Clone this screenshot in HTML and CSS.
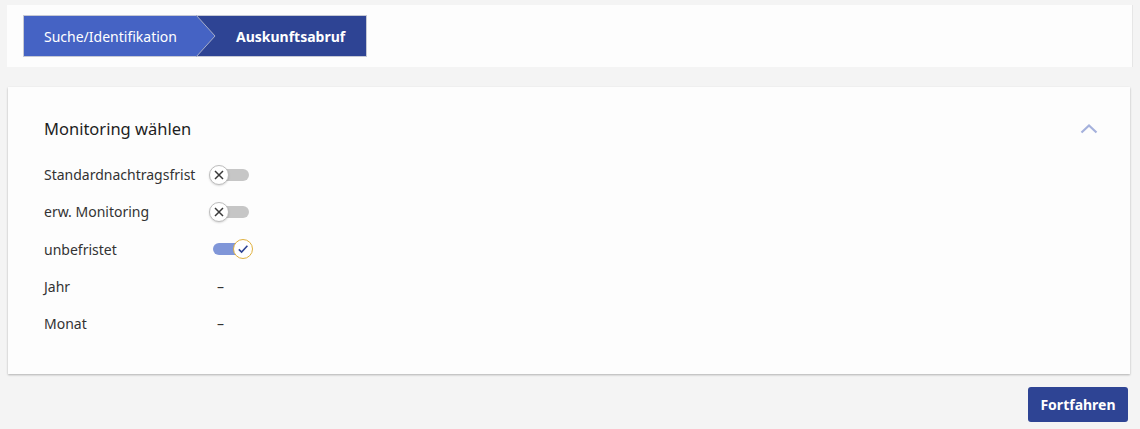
FILE: index.html
```html
<!DOCTYPE html>
<html lang="de">
<head>
<meta charset="utf-8">
<title>Auskunftsabruf</title>
<link rel="stylesheet" href="styles.css">
</head>
<body>
<div class="top-panel">
  <nav class="crumbs">
    <div class="crumb crumb-first">
      <span>Suche/Identifikation</span>
      <svg class="crumb-arrow" width="20" height="42" viewBox="0 0 20 42"><polygon points="0,0 19,21 0,42" fill="#4563c4"/><polyline points="0,0 19,21 0,42" fill="none" stroke="#a7aec8" stroke-width="1"/></svg>
    </div>
    <div class="crumb crumb-active">Auskunftsabruf</div>
  </nav>
</div>

<section class="card">
  <div class="card-head">
    <h2 class="card-title">Monitoring wählen</h2>
    <svg class="chevron" width="18" height="11" viewBox="0 0 18 11"><polyline points="1.5,9.5 9,2.5 16.5,9.5" fill="none" stroke="#a5b1dc" stroke-width="2.2"/></svg>
  </div>
  <div class="rows">
    <div class="row">
      <span class="label">Standardnachtragsfrist</span>
      <span class="toggle off"><span class="track"></span><span class="thumb"><svg width="12" height="12" viewBox="0 0 12 12"><path d="M2 2 L10 10 M10 2 L2 10" stroke="#3a3a3a" stroke-width="1.5" fill="none"/></svg></span></span>
    </div>
    <div class="row">
      <span class="label">erw. Monitoring</span>
      <span class="toggle off"><span class="track"></span><span class="thumb"><svg width="12" height="12" viewBox="0 0 12 12"><path d="M2 2 L10 10 M10 2 L2 10" stroke="#3a3a3a" stroke-width="1.5" fill="none"/></svg></span></span>
    </div>
    <div class="row">
      <span class="label">unbefristet</span>
      <span class="toggle on"><span class="track"></span><span class="thumb"><svg width="12" height="12" viewBox="0 0 12 12"><path d="M1.8 6.4 L4.6 9 L10.4 2.8" stroke="#2e4494" stroke-width="1.6" fill="none"/></svg></span></span>
    </div>
    <div class="row">
      <span class="label">Jahr</span>
      <span class="value">–</span>
    </div>
    <div class="row">
      <span class="label">Monat</span>
      <span class="value">–</span>
    </div>
  </div>
</section>

<div class="actions">
  <button class="btn-primary" type="button">Fortfahren</button>
</div>
</body>
</html>
```
FILE: styles.css
```css
* { box-sizing: border-box; }
html, body { margin: 0; padding: 0; }
body {
  background: #f4f4f4;
  font-family: "Noto Sans", "Open Sans", sans-serif;
  color: #333;
  font-size: 14px;
}
.top-panel {
  margin: 5px 7px 0 7px;
  height: 62px;
  background: #fdfdfd;
  padding: 10px 16px;
  border-right: 1px solid #e6e6e6;
}
.crumbs {
  display: inline-flex;
  height: 42px;
  border: 1px solid #c6c9d4;
}
.crumb {
  display: flex;
  align-items: center;
  height: 40px;
  font-size: 14px;
  color: #fff;
}
.crumb-first {
  position: relative;
  width: 173px;
  background: #4563c4;
  padding-left: 20px;
}
.crumb-arrow {
  position: absolute;
  right: -19px;
  top: -1px;
  z-index: 1;
}
.crumb-active {
  width: 169px;
  background: #2e4494;
  padding-left: 39px;
  font-weight: 700;
}
.card {
  margin: 20px 10px 0 8px;
  height: 287px;
  background: #fdfdfd;
  box-shadow: 0 1px 2px rgba(0,0,0,0.28);
  padding: 27px 32px 0 36px;
}
.card-head {
  display: flex;
  align-items: center;
  justify-content: space-between;
  height: 28px;
}
.card-title {
  margin: 0;
  font-size: 16.5px;
  font-weight: 400;
  color: #1e1e1e;
}
.chevron { margin-top: 0; }
.rows {
  margin-top: 14px;
  display: flex;
  flex-direction: column;
}
.row {
  display: flex;
  align-items: center;
  height: 37.3px;
}
.label {
  width: 165px;
  color: #333;
}
.value {
  padding-left: 8px;
}
.toggle {
  position: relative;
  width: 44px;
  height: 22px;
}
.track {
  position: absolute;
  top: 5px;
  height: 12px;
  border-radius: 6px;
}
.off .track { left: 6px; width: 34px; background: #c6c6c6; }
.on .track { left: 4px; width: 32px; background: #8096d8; }
.thumb {
  position: absolute;
  top: 1px;
  width: 20px;
  height: 20px;
  border-radius: 50%;
  background: #fff;
  display: flex;
  align-items: center;
  justify-content: center;
}
.off .thumb { left: 0; border: 1.5px solid #bdbdbd; box-shadow: 0 1px 2px rgba(0,0,0,0.15); }
.on .thumb { left: 24px; border: 1.5px solid #dfb03e; }
.actions {
  display: flex;
  justify-content: flex-end;
  padding: 13px 12px 0 0;
}
.btn-primary {
  width: 100px;
  height: 35px;
  background: #2e4494;
  color: #fff;
  border: none;
  border-radius: 3px;
  font-family: "Noto Sans", "Open Sans", sans-serif;
  font-weight: 700;
  font-size: 14px;
}
```
